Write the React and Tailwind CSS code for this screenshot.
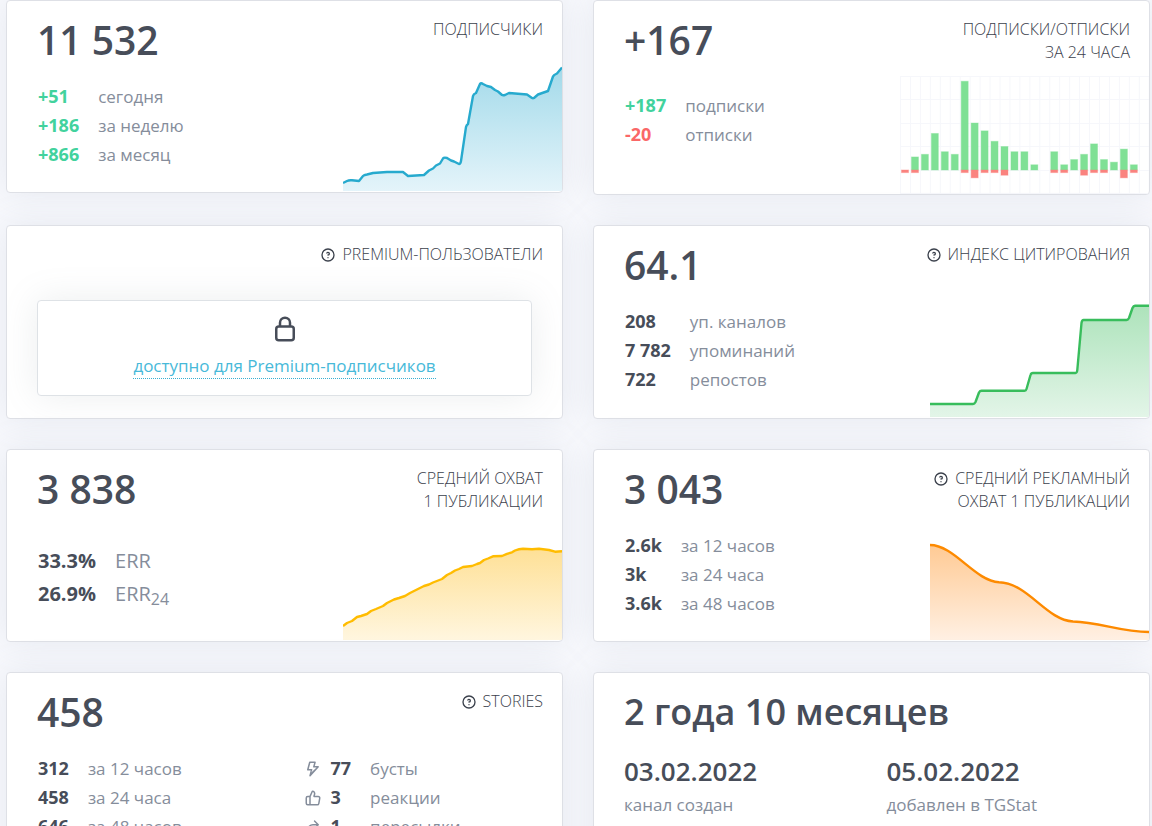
import React, { useId } from 'react';

const ICONS = {
  question:
    'M11.29,15.29a1.58,1.58,0,0,0-.12.15.76.76,0,0,0-.09.18.64.64,0,0,0-.06.18,1.36,1.36,0,0,0,0,.2.84.84,0,0,0,.08.38.9.9,0,0,0,.54.54.94.94,0,0,0,.76,0,.9.9,0,0,0,.54-.54A1,1,0,0,0,13,16a1,1,0,0,0-.29-.71A1,1,0,0,0,11.29,15.29ZM12,2A10,10,0,1,0,22,12,10,10,0,0,0,12,2Zm0,18a8,8,0,1,1,8-8A8,8,0,0,1,12,20ZM12,7A3,3,0,0,0,9.4,8.5a1,1,0,1,0,1.73,1A1,1,0,0,1,12,9a1,1,0,0,1,0,2,1,1,0,1,0,0,2,3,3,0,0,0,0-6Z',
  lock: 'M17,9V7A5,5,0,0,0,7,7V9a3,3,0,0,0-3,3v7a3,3,0,0,0,3,3H17a3,3,0,0,0,3-3V12A3,3,0,0,0,17,9ZM9,7a3,3,0,0,1,6,0V9H9Zm9,12a1,1,0,0,1-1,1H7a1,1,0,0,1-1-1V12a1,1,0,0,1,1-1H17a1,1,0,0,1,1,1Z',
  bolt: 'M19.87,8.6A1,1,0,0,0,19,8H14.42l1.27-4.74a1,1,0,0,0-.17-.87A1,1,0,0,0,14.72,2h-7a1,1,0,0,0-1,.74l-2.68,10a1,1,0,0,0,.17.87,1,1,0,0,0,.8.39H8.89L7.08,20.74a1,1,0,0,0,1.71.93L19.7,9.67A1,1,0,0,0,19.87,8.6ZM9.79,16.7l1.36-3.45A1,1,0,0,0,10.18,12H6.35L8.49,4h4.92l-1.27,4.74A1,1,0,0,0,13.11,10h3.62Z',
  like: 'M21.3,10.08A3,3,0,0,0,19,9H14.44L15,7.57A4.13,4.13,0,0,0,11.11,2a1,1,0,0,0-.91.59L7.35,9H5a3,3,0,0,0-3,3v7a3,3,0,0,0,3,3H17.73a3,3,0,0,0,2.95-2.46l1.27-7A3,3,0,0,0,21.3,10.08ZM7,20H5a1,1,0,0,1-1-1V12a1,1,0,0,1,1-1H7Zm13-7.82-1.27,7a1,1,0,0,1-1,.82H9V10.21l2.72-6.12A2.11,2.11,0,0,1,13.1,6.87L12.57,8.3A2,2,0,0,0,14.44,11H19a1,1,0,0,1,.77.36A1,1,0,0,1,20,12.18Z',
  share:
    'M19.7,8.3l-5-5a1,1,0,0,0-1.4,1.4L16.6,8H12a8,8,0,0,0-8,8v4a1,1,0,0,0,2,0V16a6,6,0,0,1,6-6h4.6l-3.3,3.3a1,1,0,0,0,1.4,1.4l5-5A1,1,0,0,0,19.7,8.3Z',
};

const Icon = ({ name, size, className = '' }) => (
  <svg viewBox="0 0 24 24" width={size} height={size} fill="currentColor" className={`shrink-0 ${className}`} aria-hidden="true">
    <path d={ICONS[name]} />
  </svg>
);

// Subscribes / unsubscribes per hour
const joined = [0, 5, 6, 14, 7, 6, 34, 18, 15, 11, 9, 7, 7, 2, 0, 7, 2, 4, 6, 10, 4, 3, 8, 2];
const left = [1, 1, 0, 0, 0, 0, 1, 3, 1, 1, 2, 0, 0, 0, 0, 1, 1, 0, 2, 1, 1, 0, 3, 1];

const BarChart = () => {
  const step = 9.95;
  const unit = 2.61;
  const zero = 94;

  return (
    <svg width="250" height="118" viewBox="0 0 250 118" className="block shrink-0 self-end" aria-hidden="true">
      <g stroke="#f6f7fb" strokeWidth="1">
        {Array.from({ length: 26 }, (_, i) => (
          <line key={i} x1={1.5 + i * step} x2={1.5 + i * step} y1="0" y2="117" />
        ))}
        {[0.5, 23.5, 47.5, 70.5, 94.5, 117.5].map((y) => (
          <line key={y} x1="1" x2="250" y1={y} y2={y} />
        ))}
      </g>
      {joined.map((n, i) => (
        <g key={i}>
          {n > 0 && <rect x={2.5 + i * step} y={zero - n * unit} width="7" height={n * unit} fill="#7fe095" stroke="#7fe095" strokeOpacity="0.4" />}
          {left[i] > 0 && <rect x={2.5 + i * step} y={zero} width="7" height={left[i] * unit} fill="#fa837f" stroke="#fa837f" strokeOpacity="0.4" />}
        </g>
      ))}
    </svg>
  );
};

const AreaChart = ({ d, height, stroke, from, to }) => {
  const id = useId();

  return (
    <svg width="219" height={height} viewBox={`0 0 219 ${height}`} className="mb-px block shrink-0 self-end" aria-hidden="true">
      <defs>
        <linearGradient id={id} x1="0" y1="0" x2="0" y2="1">
          <stop offset="0" stopColor={from} />
          <stop offset="1" stopColor={to} />
        </linearGradient>
      </defs>
      <path d={`${d}V${height}H0Z`} fill={`url(#${id})`} />
      <path d={d} fill="none" stroke={stroke} strokeWidth="2.4" strokeLinejoin="round" />
    </svg>
  );
};

const Card = ({ value, title, hint, height = 'min-h-[193px]', valueSize = 'text-[39px]', children }) => (
  <section className={`flex flex-col overflow-hidden rounded border border-[#dee0e6] bg-white pl-[30px] ${height}`}>
    <header className="flex min-h-[63px] items-start justify-between">
      <h2 className={`pt-4 leading-[46px] font-semibold whitespace-nowrap ${valueSize}`}>{value}</h2>
      {title && (
        <h3 className="pt-[17px] pr-[19px] text-right text-[16px] leading-[23px] font-light whitespace-pre-line text-[#3b414c] uppercase">
          {hint && <Icon name="question" size={16} className="mr-[6px] inline-block align-[-3px]" />}
          {title}
        </h3>
      )}
    </header>
    {children}
  </section>
);

const Stats = ({ rows, className = 'mt-[18px] leading-[29px]', valueSize = 'text-[18px]', labelSize = 'text-[17px]' }) => (
  <table className={`self-start justify-self-start ${className}`}>
    <tbody>
      {rows.map(({ value, label, color = '', icon }) => (
        <tr key={value}>
          {icon && (
            <td className="pr-2 text-[#858d9b]">
              <Icon name={icon} size={18} />
            </td>
          )}
          <th scope="row" className={`pr-[19px] pl-px text-left font-bold whitespace-nowrap ${valueSize} ${color}`}>{value}</th>
          <td className={`whitespace-nowrap text-[#858d9b] ${labelSize}`}>{label}</td>
        </tr>
      ))}
    </tbody>
  </table>
);

const App = () => (
  <main
    className="grid min-h-screen grid-cols-2 items-start gap-[30px] bg-[#f8f9fd] pr-[2px] pb-[30px] pl-[6px] font-['Open_Sans',sans-serif] text-[#474d59] *:shadow-[0_0_35px_0_rgba(130,140,160,0.15)]"
  >
    <Card value="11 532" title="Подписчики">
      <div className="flex flex-1 justify-between">
        <Stats
          rows={[
            { value: '+51', label: 'сегодня', color: 'text-[#42d29d]' },
            { value: '+186', label: 'за неделю', color: 'text-[#42d29d]' },
            { value: '+866', label: 'за месяц', color: 'text-[#42d29d]' },
          ]}
        />
        <AreaChart
          height={125}
          stroke="#27aace"
          from="#a3daea"
          to="#e4f4fa"
          d="M0,117L4,115Q6,114 9,114.3L16,115L20,110Q21,109 24,108.500L30,107L44,106H60L65,110L81,109L86,104.500L90,102.500L93,99.500L97,97.500L100,92.500Q101,91 104,92L108,94.500L111,95.500L116,98Q117.500,98 118,95L123,61Q123.500,59 125,58L130,30Q130.500,28 133,27L137,18Q138,16.500 140,18L144,20L148,21L152,24L155,25.500L159,29Q160,29.500 162,29L166,27L184,28.500L189,32Q190,32.500 191,32L195,28.500L205,25L210,10.500Q210.500,9 214,7.500L219,1.500"
        />
      </div>
    </Card>

    <Card value="+167" title={'Подписки/отписки\nза 24 часа'} height="min-h-[195px]">
      <div className="flex flex-1 justify-between pt-[9px]">
        <Stats
          rows={[
            { value: '+187', label: 'подписки', color: 'text-[#42d29d]' },
            { value: '-20', label: 'отписки', color: 'text-[#fa6767]' },
          ]}
        />
        <BarChart />
      </div>
    </Card>

    <Card title="Premium-пользователи" hint>
      <div className="mt-[11px] mr-[30px] mb-[22px] flex flex-col items-center rounded border border-[#dee2e6] bg-white pt-[13px] pb-4 shadow-[0_0_35px_0_rgba(130,140,150,0.15)]">
        <Icon name="lock" size={30} />
        <a href="#premium" className="mt-[9px] border-b border-dotted border-[#39afd1] text-[17px] leading-[25px] text-[#47b9d9]">
          доступно для Premium-подписчиков
        </a>
      </div>
    </Card>

    <Card value="64.1" title="Индекс цитирования" hint height="min-h-[194px]">
      <div className="flex flex-1 justify-between">
        <Stats
          rows={[
            { value: '208', label: 'уп. каналов' },
            { value: '7 782', label: 'упоминаний' },
            { value: '722', label: 'репостов' },
          ]}
        />
        <AreaChart
          height={114}
          stroke="#38bd5c"
          from="#ade3bb"
          to="#e3f5e8"
          d="M0,101H43Q44.500,101 45.500,99L49,89.500Q50,87.700 51.500,87.700H94.500Q96,87.700 96.500,86L100.500,72Q101,70 103,70H145.500Q147,70 147.300,67L151.500,20Q152,17 153.500,17H196.500Q198,17 199,15L202.500,5Q203.500,2.700 205,2.700H219"
        />
      </div>
    </Card>

    <Card value="3 838" title={'Средний охват\n1 публикации'}>
      <div className="flex flex-1 justify-between">
        <Stats
          className="mt-[31px] leading-[33px]"
          valueSize="text-[20px]"
          labelSize="text-[20px]"
          rows={[
            { value: '33.3%', label: 'ERR' },
            { value: '26.9%', label: <>ERR<sub className="text-[16px]">24</sub></> },
          ]}
        />
        <AreaChart
          height={94}
          stroke="#ffbc00"
          from="#fee096"
          to="#fff6df"
          d="M0,80L4,77L9,75L14,71L18,70L24,68L28,65L33,63L40,60L44,57L51,53.500L56,52L62,50L67,47L74,43.500L81,40L86,38.500L90,36.500L99,33L104,29L108,27L112,24.500L116,23L120,21L129,20L134,18L137,17L141,14L145,12.500L150,10.300L159,10L164,7.800L169,6.300L172,4.500Q176,3 180,2.800L189,3.300L196,2.800L206,4L212,5.700L219,5.300"
        />
      </div>
    </Card>

    <Card value="3 043" title={'Средний рекламный\nохват 1 публикации'} hint>
      <div className="flex flex-1 justify-between">
        <Stats
          rows={[
            { value: '2.6k', label: 'за 12 часов' },
            { value: '3k', label: 'за 24 часа' },
            { value: '3.6k', label: 'за 48 часов' },
          ]}
        />
        <AreaChart
          height={98}
          stroke="#fd8a00"
          from="#ffca94"
          to="#fff0e3"
          d="M0,3C24,3 45,39 69,40.300C98,41 116,78 143,79.500C170,80 190,90 219,90"
        />
      </div>
    </Card>

    <Card value="458" title="Stories" hint>
      <div className="grid grid-cols-2 gap-2 pb-6">
        <Stats
          rows={[
            { value: '312', label: 'за 12 часов' },
            { value: '458', label: 'за 24 часа' },
            { value: '646', label: 'за 48 часов' },
          ]}
        />
        <Stats
          rows={[
            { value: '77', label: 'бусты', icon: 'bolt' },
            { value: '3', label: 'реакции', icon: 'like' },
            { value: '1', label: 'пересылки', icon: 'share' },
          ]}
        />
      </div>
    </Card>

    <Card value="2 года 10 месяцев" valueSize="text-[36px]">
      <dl className="mt-[18px] grid grid-cols-2 pb-6">
        <div className="flex flex-col">
          <dt className="text-[26px] leading-[34px] font-semibold">03.02.2022</dt>
          <dd className="mt-[3px] text-[17px] leading-[27px] text-[#858d9b]">канал создан</dd>
        </div>
        <div className="flex flex-col">
          <dt className="text-[26px] leading-[34px] font-semibold">05.02.2022</dt>
          <dd className="mt-[3px] text-[17px] leading-[27px] text-[#858d9b]">добавлен в TGStat</dd>
        </div>
      </dl>
    </Card>
  </main>
);

export default App;
